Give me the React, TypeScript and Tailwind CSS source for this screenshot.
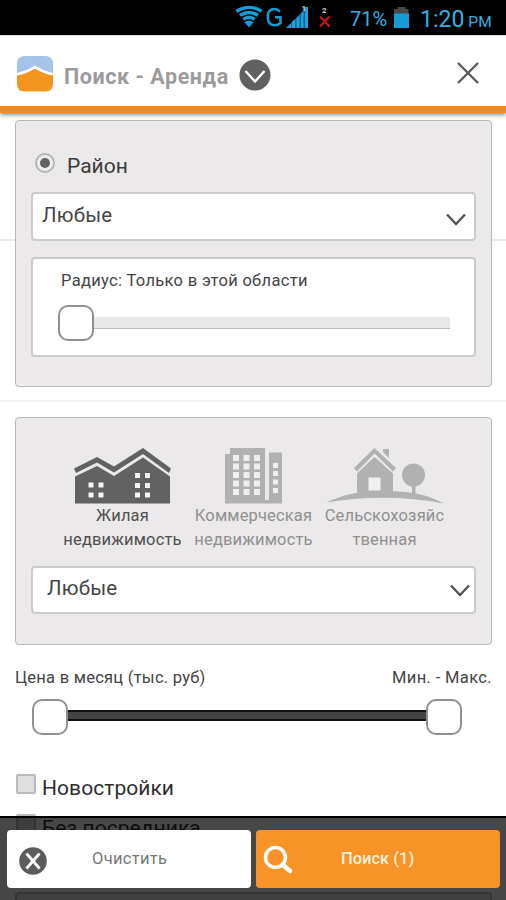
import { useState, type ReactNode } from 'react'
import clsx from 'clsx'

function StatusBar() {
  return (
    <div className="flex h-[35px] items-center bg-black pl-[234px] text-[#35b0e0]">
      <svg width="98" height="36" viewBox="0 0 98 36" className="shrink-0">
        <g fill="none" stroke="#159bd6" strokeWidth="3.4">
          <path d="M2.400 11.200Q15 3.600 27.600 11.200" />
          <path d="M6 15.400Q15 9.400 24 15.400" />
          <path d="M9.300 19.300Q15 15 20.700 19.300" />
        </g>
        <path d="M10.500 22.300Q15 18.900 19.500 22.300L15 27.400Z" fill="#159bd6" />
        <path d="M46 12.200Q43.500 9.600 40.500 9.600C36 9.600 33.800 12.900 33.800 17.600S36 25.700 40.500 25.700Q44 25.700 46.500 23.500V17.800H41" fill="none" stroke="#159bd6" strokeWidth="2.500" transform="translate(0 -0.500)" />
        <path d="M52 28L74 6V28Z" fill="#0d5f8d" />
        <g fill="#1ba1dc">
          <path d="M53 27l4-3.500v4.500h-4z" />
          <path d="M58 22l3-3v9h-3z" />
          <path d="M62.500 18l3-3v13h-3z" />
          <path d="M67 13.500l2.500-2.500v17h-2.500z" />
          <path d="M71 7h3v21h-3z" />
        </g>
        <path d="M86 16.500l9.500 10M95.500 16.500l-9.500 10" stroke="#c4141c" strokeWidth="2.400" />
        <text x="67.500" y="11" fill="#dddddd" fontSize="8" fontWeight="bold" fontFamily="Roboto, sans-serif">1</text>
        <text x="88" y="13" fill="#cccccc" fontSize="8" fontWeight="bold" fontFamily="Roboto, sans-serif">2</text>
      </svg>
      <span className="ml-[18px] w-[44px] pt-[3px] text-[20px]">71%</span>
      <svg width="15" height="22" viewBox="0 0 15 22" className="shrink-0">
        <path d="M3.500 0h8v2h3v6H0V2h3.500z" fill="#484848" />
        <path d="M0 6.500h15V21H0z" fill="#159bd6" />
      </svg>
      <span className="ml-[11px] flex items-baseline pt-[3px] whitespace-nowrap">
        <span className="text-[23px] leading-none">1:20</span>
        <span className="ml-1 text-[15.500px] leading-none">PM</span>
      </span>
    </div>
  )
}

function Header() {
  return (
    <header className="relative z-10 flex h-[78px] items-center border-t border-b-[7px] border-t-[#d8d8d8] border-b-[#f78b1e] bg-white pt-[3px] pl-[17px] shadow-[0_2px_4px_rgba(0,0,0,0.45)]">
      <svg width="36" height="36" viewBox="0 0 36 36" className="mt-[2px] shrink-0">
        <path d="M8 0h20q8 0 8 8v10.500L18 11 0 18.500V8q0-8 8-8z" fill="#a3c3e8" />
        <path d="M0 19.500C7 18.500 13 15.500 18 12.500c5 3 11 6 18 7V28q0 7.500-8 7.500H8Q0 35.500 0 28z" fill="#f2941d" />
        <path d="M0 18C7 17 13 14 18 10.800c5 3.200 11 6.200 18 7.200" fill="none" stroke="#ffffff" strokeWidth="2.200" />
      </svg>
      <h1 className="ml-[11px] w-[166px] pt-[9px] text-[21.500px] font-bold tracking-[0.550px] whitespace-nowrap text-[#9b9b9b]">Поиск - Аренда</h1>
      <button type="button" className="mt-1 ml-[9px]">
        <svg width="32" height="32" viewBox="0 0 32 32">
          <circle cx="16" cy="16" r="15.500" fill="#616161" />
          <path d="M6.500 12l9.500 10.500L25.500 12" fill="none" stroke="#ffffff" strokeWidth="2.400" />
        </svg>
      </button>
      <button type="button" className="ml-[186px]">
        <svg width="22" height="22" viewBox="0 0 22 22">
          <path d="M1 1l20 20M21 1L1 21" stroke="#5c5c5c" strokeWidth="2.400" />
        </svg>
      </button>
    </header>
  )
}

function Panel({ className, children }: { className?: string; children: ReactNode }) {
  return (
    <div className={clsx('relative mr-[14px] ml-[15px] rounded-[4px] border-[1.500px] border-[#b8b8b8] bg-[#ebe9ea] px-[15px]', className)}>
      {children}
    </div>
  )
}

function Select({ value, className }: { value: string; className?: string }) {
  return (
    <button type="button" className={clsx('flex w-full justify-between rounded-[4px] border-2 border-[#cbcbcb] bg-white text-left text-[#444444]', className)}>
      <span className="text-[20.500px] leading-[24px] tracking-[0.200px]">{value}</span>
      <svg width="20" height="13" viewBox="0 0 20 13">
        <path d="M1 1.500l9 9.500 9-9.500" fill="none" stroke="#555555" strokeWidth="2.400" />
      </svg>
    </button>
  )
}

function Handle() {
  return <span className="relative block size-9 shrink-0 rounded-[10px] border-2 border-[#909090] bg-white" />
}

const categories = [
  {
    id: 'living',
    lines: ['Жилая', 'недвижимость'],
    icon: (
      <svg width="98" height="56" viewBox="0 0 98 56" fill="currentColor">
        <path d="M0 20.500L23 9l17 9.500L69 0l28 20.500-2 4.500L69 6 40 24.500 23 14.500 2 25z" />
        <path d="M1 28.500L23 18l17 10L69 9.500 96 28.500V55.500H1z" />
        <path d="M14.500 34.500h5v5h-5zm10 0h5v5h-5zm-10 10h5v5h-5zm10 0h5v5h-5zM61 25h5v5h-5zm10 0h5v5h-5zm-10 10h5v5h-5zm10 0h5v5h-5zm-10 9.500h5v5h-5zm10 0h5v5h-5z" fill="#f5f4f4" />
      </svg>
    ),
  },
  {
    id: 'commercial',
    lines: ['Коммерческая', 'недвижимость'],
    icon: (
      <svg width="57" height="56" viewBox="0 0 57 56" fill="currentColor">
        <path d="M0 6h5V0h35v52h4V4.500h13v51H0z" />
        <g fill="#f0efef">
          {[7, 15.5, 24, 32.5, 41].map((y) =>
            [8, 18.5, 29].map((x) => <rect key={`${x}-${y}`} x={x} y={y} width="6" height="6" />)
          )}
          {[15, 23, 31.5, 40].map((y) => (
            <rect key={y} x="48" y={y} width="5" height="5" />
          ))}
        </g>
      </svg>
    ),
  },
  {
    id: 'farm',
    lines: ['Сельскохозяйс', 'твенная'],
    icon: (
      <svg width="118" height="56" viewBox="0 0 118 56" fill="currentColor">
        <path d="M0 54.500C18 47 30 43 58 43s44 4 60 12.500C80 48 37 48 0 54.500z" />
        <path d="M28 20L48.500 0 70 20l-3 3.500L48.500 5.500 31 23.500z" />
        <path d="M31 25.500L48.500 9 67 25.500V45H31z" />
        <path d="M42.500 29.500h12v13h-12z" fill="#f1f0f0" />
        <path d="M57 1h6v9l-6-6z" />
        <circle cx="87.500" cy="27" r="11.500" />
        <path d="M86 36h3.500v10H86z" />
      </svg>
    ),
  },
]

function Checkbox({ label }: { label: string }) {
  return (
    <label className="flex h-10 items-start text-[21px] text-[#2e2e2e]">
      <span className="size-5 shrink-0 rounded-[2px] border-2 border-[#bababa] bg-[#dedede]" />
      <span className="ml-[6px] leading-[29px] tracking-[0.060px]">{label}</span>
    </label>
  )
}

export default function App() {
  const [active, setActive] = useState('living')

  return (
    <div className="relative h-[900px] w-[506px] overflow-hidden bg-white font-['Roboto',sans-serif]">
      <StatusBar />
      <Header />

      {/* District and radius. The panels are taller than their rows and run over the separators. */}
      <section className="h-[128px] border-b-2 border-[#ebebeb] pt-[7px]">
        <Panel className="h-[267px] pt-[32px]">
          <label className="flex h-[39px] items-start">
            <span className="ml-1 flex size-5 items-center justify-center rounded-full border-2 border-[#b5b5b5] bg-[#efefef]">
              <span className="size-[10px] rounded-full bg-[#636363]" />
            </span>
            <span className="ml-[12px] text-[21px] leading-[27px] text-[#3b3b3b]">Район</span>
          </label>
          <Select value="Любые" className="h-[49px] pt-[9px] pr-[8px] pl-[9px] [&>svg]:mt-[10px]" />
          <div className="mt-[16px] h-[100px] rounded-[4px] border-2 border-[#cbcbcb] bg-white px-[25px]">
            <p className="ml-[3px] pt-[12px] text-[16.500px] leading-[20px] tracking-[0.320px] text-[#444444]">Радиус: Только в этой области</p>
            <div className="mt-[14px] flex items-center">
              <Handle />
              <span className="-ml-px h-3 w-[357px] shrink-0 border-b-[1.500px] border-[#bbbbbb] bg-[#e9e8e8]" />
            </div>
          </div>
        </Panel>
      </section>

      <section className="h-[161px] border-b-2 border-[#f1f1f1]" />

      <section className="pt-[15px]">
        <Panel className="h-[228px] pt-[30px]">
          <div className="flex h-[118px] justify-start">
            {categories.map((category) => (
              <button
                key={category.id}
                type="button"
                onClick={() => setActive(category.id)}
                className={clsx(
                  'flex w-[131px] shrink-0 flex-col items-center first:ml-[26px]',
                  active === category.id ? 'text-[#626262]' : 'text-[#b1b1b1]'
                )}
              >
                {category.icon}
                <span className={clsx('text-[16.500px] leading-[24px] tracking-[0.150px]', active === category.id ? 'text-[#505050]' : 'text-[#8f8f8f]')}>
                  {category.lines[0]}
                  <br />
                  {category.lines[1]}
                </span>
              </button>
            ))}
          </div>
          <Select value="Любые" className="h-[48px] pt-[8px] pr-[4px] pl-[14px] [&>svg]:mt-[8px]" />
        </Panel>
      </section>

      <section className="pr-[14px] pl-[15px]">
        <div className="flex justify-between pt-[23px] text-[16.500px] leading-[20px] tracking-[0.250px] text-[#444444]">
          <span>Цена в месяц (тыс. руб)</span>
          <span className="tracking-[0.350px]">Мин. - Макс.</span>
        </div>
        <div className="mt-[11px] ml-[17px] flex w-[430px] items-center">
          <Handle />
          <span className="-mx-px mb-[3px] h-[11px] flex-1 border-y-2 border-[#111111] bg-[#444444]" />
          <Handle />
        </div>
        <div className="mt-[39px] ml-px">
          <Checkbox label="Новостройки" />
          <Checkbox label="Без посредника" />
        </div>
        <div className="mt-[38px] h-10 rounded-[4px] border-2 border-[#bdbdbd] bg-[#ebe9ea]" />
      </section>

      <footer className="absolute inset-x-0 bottom-0 z-20 flex h-[84px] gap-[5px] border-t-2 border-black bg-black/72 pt-[12px] pl-[7px]">
        <button type="button" className="flex h-[58px] w-[244px] items-center rounded-[4px] bg-white pl-[12px]">
          <svg width="28" height="28" viewBox="0 0 28 28" className="mt-1">
            <circle cx="14" cy="14" r="13.800" fill="#5c5c5c" />
            <path d="M7.500 6.500l13 15M20.500 6.500l-13 15" stroke="#ffffff" strokeWidth="2.800" />
          </svg>
          <span className="ml-[45px] text-[16.500px] tracking-[0.300px] text-[#777777]">Очистить</span>
        </button>
        <button type="button" className="flex h-[58px] w-[244px] items-center rounded-[4px] bg-[#f79327] pl-[7px]">
          <svg width="30" height="30" viewBox="0 0 30 30" fill="none" stroke="#ffffff">
            <circle cx="12.500" cy="13.500" r="10" strokeWidth="3.500" />
            <path d="M19.500 20.500l7.500 6.500" strokeWidth="4.500" strokeLinecap="round" />
          </svg>
          <span className="ml-[48px] text-[16.500px] font-medium text-[#fff0dc]">Поиск (1)</span>
        </button>
      </footer>
    </div>
  )
}
